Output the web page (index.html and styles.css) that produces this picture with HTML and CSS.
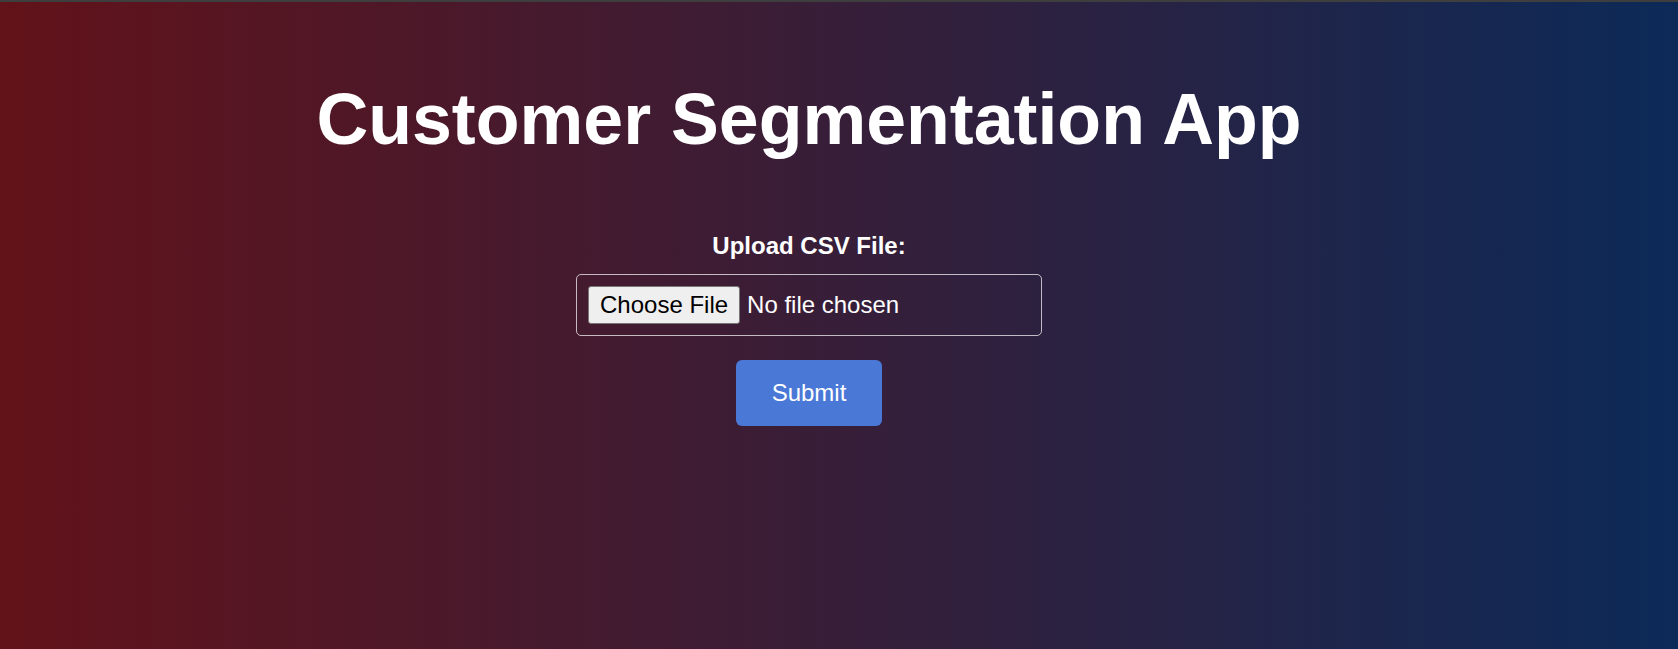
FILE: index.html
```html
<!DOCTYPE html>
<html lang="en">
<head>
    <meta charset="UTF-8">
    <meta name="viewport" content="width=device-width, initial-scale=1.0">
    <title>Customer Segmentation App</title>
    <link rel="stylesheet" href="styles.css">
</head>
<body>
    <div class="container">
        <h1>Customer Segmentation App</h1>

        <!-- Форма загрузки файла -->
        <form class="upload-form" action="#" method="post" enctype="multipart/form-data">
            <label for="csvFile">Upload CSV File:</label>
            <input type="file" id="csvFile" name="file" accept=".csv">
            <button type="submit" class="submit-btn">Submit</button>
        </form>
    </div>
</body>
</html>
```

FILE: styles.css
```css
/* Общие стили страницы */
body {
    font-family: "Liberation Sans", Arial, sans-serif;
    margin: 0;
    min-height: 100vh;
    box-sizing: border-box;
    border-top: 2px solid #3e3e3e;
    background: linear-gradient(to right, #621219, #0c2a58);
    color: #fff;
}

.container {
    text-align: center;
    padding: 76px 60px 0 0;
}

h1 {
    font-size: 71.7px;
    font-weight: bold;
    margin: 0 0 72px;
    color: #fff;
}

.upload-form {
    display: flex;
    flex-direction: column;
    align-items: center;
}

.upload-form label {
    font-size: 24px;
    font-weight: bold;
    margin-bottom: 14px;
}

.upload-form input[type="file"] {
    box-sizing: border-box;
    width: 466px;
    padding: 11px;
    border: 1px solid rgba(255, 255, 255, 0.7);
    border-radius: 5px;
    font-family: "Liberation Sans", Arial, sans-serif;
    font-size: 24px;
    color: #fff;
    text-align: left;
}

.upload-form input[type="file"]::file-selector-button {
    font-family: "Liberation Sans", Arial, sans-serif;
    font-size: 24px;
    color: #000;
    background: #efefef;
    border: 1px solid #767676;
    border-radius: 3px;
    padding: 4px 11px;
    margin-right: 7px;
}

.submit-btn {
    margin-top: 24px;
    padding: 19px 36px;
    font-family: "Liberation Sans", Arial, sans-serif;
    font-size: 24px;
    color: #fff;
    background-color: #4a78d6;
    border: none;
    border-radius: 6px;
    cursor: pointer;
}
```
